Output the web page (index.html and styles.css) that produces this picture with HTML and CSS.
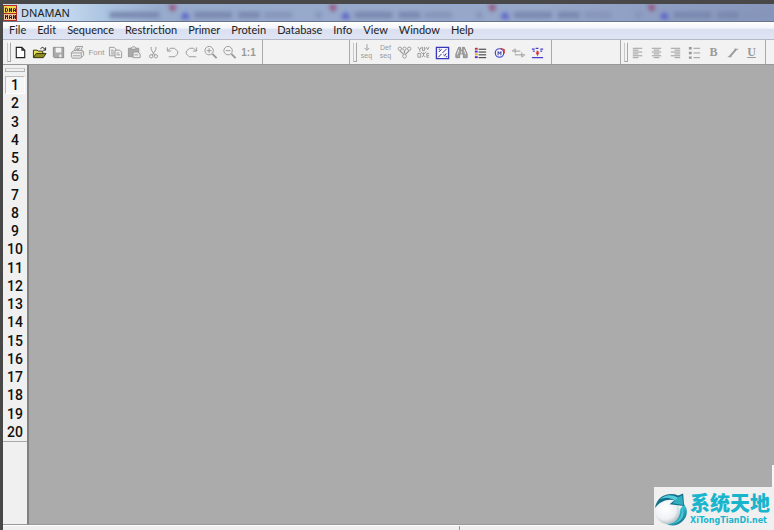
FILE: index.html
```html
<!DOCTYPE html>
<html lang="en">
<head>
<meta charset="utf-8">
<title>DNAMAN</title>
<link rel="stylesheet" href="styles.css">
</head>
<body>
<div class="window">
  <header class="titlebar">
    <svg class="app-icon" viewBox="0 0 14 16" aria-hidden="true">
      <path fill="#b32a24" d="M0 0h14v16H0z"/><path fill="#f5d84a" d="M1 1h12v7H1z"/><path fill="#f0c79a" d="M1 9h12v6H1z"/>
      <path fill="none" stroke="#2b1d52" d="M2.500 3v4h1l1-1V4l-1-1zM6.500 7V3l2 4V3M10.500 7V4l1-1 1 1v3M10.500 5.500h2M2.500 14v-4l1 2 1-2v4M6.500 14v-3l1-1 1 1v3M6.500 12.500h2M10.500 14v-4l2 4v-4"/>
    </svg>
    <h1 class="title">DNAMAN</h1>
    <svg class="glass" viewBox="0 0 774 18" preserveAspectRatio="xMinYMin slice" aria-hidden="true">
      <defs>
        <g id="tab">
          <path class="smear" d="M20 11h38M64 11h22"/>
          <path class="smear faint" d="M90 11h28M142 11h6"/>
          <path fill="#5a60c8" d="M7 15l1-5 4-2 4 7z"/>
          <path fill="#94486f" d="M-6 1h8l-2 6h-3z"/>
        </g>
      </defs>
      <g class="soft">
        <path class="smear" d="M107 11h50"/>
        <use href="#tab" x="172"/><use href="#tab" x="333"/><use href="#tab" x="493"/><use href="#tab" x="653"/>
      </g>
    </svg>
  </header>
  <nav class="menu">
    <button>File</button><button>Edit</button><button>Sequence</button><button>Restriction</button><button>Primer</button><button>Protein</button><button>Database</button><button>Info</button><button>View</button><button>Window</button><button>Help</button>
  </nav>
  <div class="toolbars">
    <div class="band">
      <div class="tools" role="toolbar" aria-label="Standard">
        <button aria-label="New"><svg viewBox="0 0 16 16"><path fill="#fff" stroke="#222" stroke-width="1.200" d="M3.500 2.500h6l3 3v8h-9zM9.500 2.500v3h3"/></svg></button>
        <button aria-label="Open"><svg viewBox="0 0 16 16"><path fill="#e8dc58" stroke="#302f08" d="M1.500 13V5.500h4l1 1h5V9"/><path fill="#8b8b20" stroke="#302f08" d="M1.500 13.500L4.500 9H15l-3 4.500z"/><path fill="none" stroke="#222" d="M9 4l2-1.500 2 1 1 1.500M14.500 2.500V5.500H12"/></svg></button>
        <button aria-label="Save"><svg viewBox="0 0 16 16"><path fill="#aaa" stroke="#8a8a8a" d="M2.500 2.500h11v11h-10l-1-1z"/><path fill="#f2f2f2" d="M5 3h6v5H5zM9 10h2v3H9z"/></svg></button>
        <button aria-label="Print"><svg viewBox="0 0 16 16" class="line"><path d="M4.500 6l2-4.500h7L11.500 6M2 7.500L4 6h9.500l1 1v4l-3 3H2.500L1.500 12V8zM2 8.500h10l2-2M3 11.500h8M12 8.500v5M7 3.500h4M6 5h4"/></svg></button>
        <button class="label-tool">Font</button>
        <button aria-label="Copy"><svg viewBox="0 0 16 16" class="line"><path fill="#f4f4f4" d="M1.500 2.500h5l2 2v7h-7zM3 5.500h3M3 7.500h4M3 9.500h4"/><path fill="#f4f4f4" d="M7.500 5.500h5l2 2v6h-7zM9 8.500h3M9 10.500h4"/></svg></button>
        <button aria-label="Paste"><svg viewBox="0 0 16 16" class="line"><path fill="#aaa" d="M1.500 3.500h11v9h-11z"/><path fill="#eee" d="M4.500 4.500V3l1-1h3l1 1v1.500zM6.500 7.500h5l2.500 2v4H6.500zM8 10.500h4"/></svg></button>
        <button aria-label="Cut"><svg viewBox="0 0 16 16" class="line"><path d="M5.500 2v3l4 6M10.500 2v3l-4 6"/><circle cx="5.500" cy="12" r="1.800"/><circle cx="10.500" cy="12" r="1.800"/></svg></button>
        <button aria-label="Undo"><svg viewBox="0 0 16 16" class="line"><path d="M2.500 2.500v4h4M3 6l3-2.500h4l3.500 3v3L10.500 12.500H4"/></svg></button>
        <button aria-label="Redo"><svg viewBox="0 0 16 16" class="line"><path d="M13.500 2.500v4h-4M13 6l-3-2.500H6l-3.500 3v3l3 3H13"/></svg></button>
        <button aria-label="Zoom in"><svg viewBox="0 0 16 16" class="line"><circle cx="6.500" cy="6" r="4.500"/><path d="M4 6h5M6.500 3.500v5"/><path stroke-width="2" d="M10 9.500l4.500 4.500"/></svg></button>
        <button aria-label="Zoom out"><svg viewBox="0 0 16 16" class="line"><circle cx="6.500" cy="6" r="4.500"/><path d="M4 6h5"/><path stroke-width="2" d="M10 9.500l4.500 4.500"/></svg></button>
        <button class="label-tool ratio">1:1</button>
      </div>
    </div>
    <div class="band">
      <div class="tools" role="toolbar" aria-label="Sequence">
        <button class="stacked" aria-label="Load sequence"><svg viewBox="0 0 16 8" class="line"><path d="M8.500 0v6M6 4l2.500 2.500L11 4"/></svg><span>seq</span></button>
        <button class="stacked"><span>Def</span><span>seq</span></button>
        <button aria-label="Assemble"><svg viewBox="0 0 16 16" class="line"><circle cx="3" cy="4" r="1.800"/><circle cx="8" cy="4" r="1.800"/><circle cx="13" cy="4" r="1.800"/><path stroke-width="1.400" d="M3 6l4 4M13 6l-4 4M8 6v3"/><circle cx="8" cy="12" r="2"/></svg></button>
        <button aria-label="Align"><svg viewBox="0 0 16 16" class="line"><path d="M2 2l2 3 2-3M4 5v2M7 2v4h2V2M11 2l1.500 3L14 2M5 7l3 3 3-3M8 8v4M2 9h3v4H2zM6 13l2-2 2 2M14 9h-2.500v4H14M12 11h2M6 4h1M10 4h1"/></svg></button>
        <button aria-label="Dot matrix"><svg viewBox="0 0 16 16"><path fill="#fafaff" stroke="#3737bd" stroke-width="1.400" d="M1.500 2.500h13v12h-13z"/><path fill="none" stroke="#292980" d="M3.500 13L7 9.500M8 8.500L12.500 4M4 7.500l3-3M10 12l2-3M4 4.500h1.500M9 10.500h1M11.500 12.500H13"/></svg></button>
        <button aria-label="Find"><svg viewBox="0 0 16 16"><path fill="#a2a2a2" stroke="#8c8c8c" d="M5 2.500h2v3h2v-3h2l3 7v4h-4v-4H6v4H2v-4z"/><path stroke="#eee" d="M5 5l-1.500 5M11 5l1.500 5M8 7v2"/></svg></button>
        <button aria-label="Sequence list"><svg viewBox="0 0 16 16"><path stroke="#c32b32" stroke-width="2" d="M2 4h3"/><path stroke="#5a29c4" stroke-width="2" d="M2 7h3"/><path stroke="#d1b12b" stroke-width="2" d="M2 10h3"/><path stroke="#5a29c4" stroke-width="2" d="M2 13h3"/><path stroke="#222" d="M6 4.500h8M6 7.500h8M6 10.500h8M6 13.500h8"/></svg></button>
        <button aria-label="Plasmid map"><svg viewBox="0 0 16 16"><circle cx="8" cy="8.500" r="4.500" fill="#f6f6ff" stroke="#3f48cf" stroke-width="1.300"/><path fill="none" stroke="#d73535" stroke-width="1.300" d="M9 3.500l4 1.500v4"/><path fill="none" stroke="#2b2b8c" d="M6.500 11V7L8 9l1.500-2v4"/></svg></button>
        <button aria-label="Compare"><svg viewBox="0 0 16 16" class="line"><path d="M1 6.500h9M4 10.500h11M4.500 4v5M11.500 8v5M2 6l2-2M14 11l-2 2"/></svg></button>
        <button aria-label="Primer position"><svg viewBox="0 0 16 16"><path fill="none" stroke="#463dc9" stroke-width="1.300" d="M2 4.500h3M6 3.500h3M11 4.500h3M3 6.500h2M11 6.500h2M2 13.500h12"/><path fill="#d8373d" d="M7 6h2v2h1l-2 4-2-4h1z"/></svg></button>
      </div>
    </div>
    <div class="band">
      <div class="tools" role="toolbar" aria-label="Format">
        <button aria-label="Align left"><svg viewBox="0 0 16 16" class="line"><path d="M3 3.500h10M3 5.500h6M3 7.500h10M3 9.500h6M3 11.500h10M3 13.500h6"/></svg></button>
        <button aria-label="Center"><svg viewBox="0 0 16 16" class="line"><path d="M3 3.500h10M5 5.500h6M3 7.500h10M5 9.500h6M3 11.500h10M5 13.500h6"/></svg></button>
        <button aria-label="Align right"><svg viewBox="0 0 16 16" class="line"><path d="M3 3.500h10M7 5.500h6M3 7.500h10M7 9.500h6M3 11.500h10M7 13.500h6"/></svg></button>
        <button aria-label="Bullets"><svg viewBox="0 0 16 16" class="line"><path d="M7 3.500h7M7 8.500h7M7 13.500h7"/><path stroke-width="2.500" d="M2 3.500h3M2 8.500h3M2 13.500h3"/></svg></button>
        <button class="glyph">B</button>
        <button aria-label="Italic"><svg viewBox="0 0 16 16" class="line"><path stroke-width="2" d="M5 12.500L12 4.500"/><path d="M10 4.500h4M3 12.500h4"/></svg></button>
        <button class="glyph underline">U</button>
      </div>
    </div>
  </div>
  <main class="body">
    <aside class="rail">
      <div class="rail-grip"></div>
      <div class="channels">
        <button class="active">1</button><button>2</button><button>3</button><button>4</button><button>5</button><button>6</button><button>7</button><button>8</button><button>9</button><button>10</button><button>11</button><button>12</button><button>13</button><button>14</button><button>15</button><button>16</button><button>17</button><button>18</button><button>19</button><button>20</button>
      </div>
    </aside>
    <section class="workspace" aria-label="Workspace"></section>
  </main>
  <footer class="status"><span></span><span></span></footer>
  <div class="edge"></div>
  <div class="brand">
    <svg class="brand-logo" viewBox="0 0 36 36" aria-hidden="true">
      <defs>
        <radialGradient id="ball" cx=".4" cy=".35" r=".7"><stop offset="0" stop-color="#fff"/><stop offset=".65" stop-color="#eef1f3"/><stop offset="1" stop-color="#a9b8c0"/></radialGradient>
        <linearGradient id="swoosh" x1="0" y1="0" x2="1" y2="1"><stop offset="0" stop-color="#0b4c5e"/><stop offset=".5" stop-color="#35bfd3"/><stop offset="1" stop-color="#07556a"/></linearGradient>
      </defs>
      <path fill="url(#swoosh)" d="M31 13c7 9 0 21-11 22-5 0-9-2-11-5 11 3 18-3 18-12z"/>
      <circle cx="14" cy="21" r="12.500" fill="url(#ball)"/>
      <path fill="#12718a" d="M1 17C3 5 14 0 25 4l5-2 1 13-15-2 5-4C14 7 6 10 1 17z"/>
      <path fill="#56cddd" d="M6 8c6-5 12-5 18-2l3 3-3 2C18 6 12 5 6 8z"/>
      <path fill="#31adc0" d="M25 6l4-2 1 10-11-2z"/>
      <path fill="#49c5d5" d="M29 17c4 8-1 15-10 16 7-3 10-8 10-16z"/>
    </svg>
    <div class="brand-text"><strong>系统天地</strong><span>XiTongTianDi.net</span></div>
  </div>
</div>
</body>
</html>
```
FILE: styles.css
```css
*, *::before { box-sizing: border-box; }
body { margin: 0; background: #484848; font-family: "Noto Sans", "Liberation Sans", sans-serif; color: #222; }
button { margin: 0; padding: 0; border: 0; background: none; font: inherit; color: inherit; }
svg { display: block; }
.window { position: relative; display: flex; flex-direction: column; height: 100vh; padding: 4px 0 0 3px; overflow: hidden; }
.titlebar { position: relative; display: flex; align-items: center; gap: 4px; height: 18px; flex: none; border-bottom: 1px solid #68738c; background: linear-gradient(90deg, #cbdcef 0, #bfd5ec 70px, #acc5e1 100px, #97abcd 160px, #96a7ca 70%, #8796bb); }
.app-icon { width: 14px; height: 16px; z-index: 1; }
.title { margin: 0; font-size: 11px; line-height: 16px; font-weight: 400; z-index: 1; }
.glass { position: absolute; inset: 0; width: 100%; height: 100%; }
.soft { filter: blur(2px); }
.smear { fill: none; stroke: #7886ad; stroke-width: 6px; }
.faint { stroke: #8594b9; }
.menu { display: flex; align-items: flex-start; gap: 11px; height: 18px; flex: none; padding: 0 6px; border-bottom: 1px solid #b5b9c4; background: linear-gradient(#fff, #f3f5fb 35%, #dae0f0 45%, #dfe5f4); font-family: Lato, sans-serif; font-size: 11px; line-height: 16px; }
.toolbars { display: grid; grid-template-columns: 346px 271px 1fr; height: 25px; flex: none; background: #f2f2f2; border-bottom: 1px solid #999; }
.band { display: flex; border-left: 1px solid #aaa; }
.band:first-child { border-left-color: #f2f2f2; }
.band::before { content: ""; width: 4px; margin: 2px 0 2px 3px; border: 1px solid #a8a8a8; border-top-color: #fff; border-left-color: #c8c8c8; flex: none; }
.tools { display: flex; align-items: center; padding-right: 4px; border-right: 1px solid #aaa; color: #999; }
.tools button { display: flex; flex-direction: column; align-items: center; justify-content: center; width: 19px; height: 22px; }
.tools svg { width: 15px; height: 15px; }
.line { fill: none; stroke: #999; }
.tools .label-tool { font-family: "Liberation Sans", sans-serif; font-size: 8px; }
.tools .ratio { font-size: 10px; font-weight: 700; }
.tools .stacked { font-family: "Liberation Sans", sans-serif; font-size: 7px; line-height: 8px; }
.tools .stacked svg { height: 8px; }
.tools .glyph { font-family: "Liberation Serif", serif; font-size: 12px; font-weight: 700; }
.tools .underline { text-decoration: underline; }
.body { display: flex; flex: 1; min-height: 0; }
.rail { display: flex; flex-direction: column; width: 26px; background: #f0f0f0; border-right: 2px solid #818181; border-bottom: 1px solid #999; }
.rail-grip { height: 4px; margin: 3px 2px 4px; border: 1px solid #b4b4b4; border-top-color: #ccc; flex: none; }
.channels { display: grid; grid-auto-rows: 1fr; height: 366px; flex: none; border-bottom: 1px solid #aaa; font-family: Roboto, sans-serif; font-size: 14px; line-height: 18px; font-weight: 500; color: #111; }
.channels .active { margin: 0 2px; border: 1px solid #bbb; border-right-color: #fff; border-bottom-color: #fff; background: #f6f6f6; line-height: 16px; }
.workspace { flex: 1; background: #ababab; border-bottom: 1px solid #999; }
.status { display: grid; grid-template-columns: 456px 1fr; height: 5px; flex: none; background: #f0f0f0; border-top: 1px solid #fff; }
.status span + span { border-left: 1px solid #999; }
.edge { position: absolute; right: 0; bottom: 43px; width: 2px; height: 22px; background: #f6f6f6; }
.brand { position: absolute; right: 0; bottom: 0; display: flex; align-items: center; gap: 1px; width: 120px; height: 43px; background: #f0f0f0; }
.brand-logo { width: 35px; height: 36px; flex: none; }
.brand-text { display: flex; flex-direction: column; color: #18b5cd; }
.brand-text strong { font: 900 20px/24px "Noto Sans CJK SC", sans-serif; white-space: nowrap; }
.brand-text span { font: 700 8px/12px "DejaVu Sans", sans-serif; white-space: nowrap; }
```
